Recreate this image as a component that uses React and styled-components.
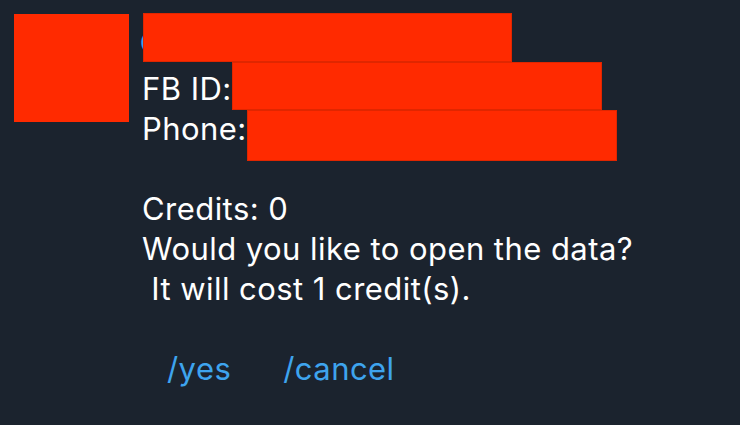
import React from "react";
import styled, { createGlobalStyle } from "styled-components";

const GlobalStyle = createGlobalStyle`
  html, body {
    margin: 0;
    padding: 0;
    background: #1b232e;
  }
  body {
    width: 740px;
    height: 425px;
    overflow: hidden;
    font-family: Inter, "Liberation Sans", sans-serif;
  }
`;

const App = () => {
  return (
    <>
      <GlobalStyle />
      <Screen>
        <Message>
          <Avatar />
          <Body>
            <Name>Contact Name</Name>
            <Line>FB ID: 100000000000000</Line>
            <Line>Phone: +0 000 000 0000</Line>
            <Line />
            <Line>Credits: 0</Line>
            <Line>Would you like to open the data?</Line>
            <Line> It will cost 1 credit(s).</Line>
            <Line />
            <Commands>
              <Command>/yes</Command>
              <Command>/cancel</Command>
            </Commands>

            {/* redaction boxes laid over the private fields */}
            <Redact $left={1} $top={-16} $w={369} $h={49} />
            <Redact $left={90} $top={33} $w={370} $h={48} />
            <Redact $left={105} $top={81} $w={370} $h={51} />
          </Body>
        </Message>
      </Screen>
    </>
  );
};

const Screen = styled.div`
  width: 740px;
  height: 425px;
  box-sizing: border-box;
  padding: 14px;
  background: #1b232e;
`;

const Message = styled.div`
  display: flex;
  align-items: flex-start;
  gap: 13px;
`;

const Avatar = styled.div`
  flex: 0 0 115px;
  height: 108px;
  background: #ff2a00;
`;

const Body = styled.div`
  position: relative;
  margin-top: 15px;
  display: flex;
  flex-direction: column;
  color: #ffffff;
  font-size: 31px;
  line-height: 40px;
  letter-spacing: 0.45px;
`;

const Line = styled.div`
  height: 40px;
  white-space: pre;
`;

const Name = styled.div`
  height: 40px;
  margin: -6px 0 6px -2px;
  font-size: 28px;
  font-weight: 600;
  color: #3ea4ee;
  white-space: pre;
`;

const Commands = styled.div`
  display: flex;
  gap: 52px;
  padding-left: 25px;
  height: 40px;
`;

const Command = styled.span`
  color: #3ea4ee;
`;

const Redact = styled.div`
  position: absolute;
  left: ${(p) => p.$left}px;
  top: ${(p) => p.$top}px;
  width: ${(p) => p.$w}px;
  height: ${(p) => p.$h}px;
  background: #ff2a00;
  box-shadow: inset 0 0 0 1px #e02600;
`;

export default App;
